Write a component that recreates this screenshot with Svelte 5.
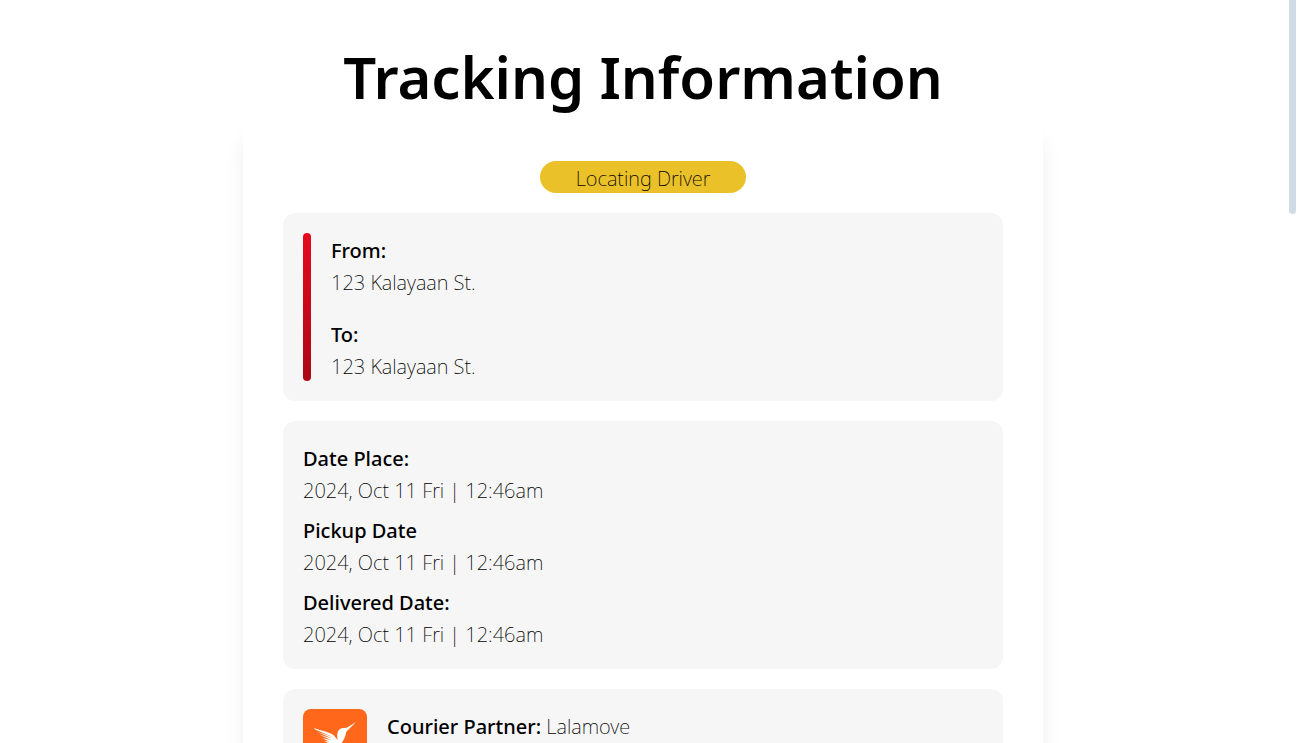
<script>
  const stops = [
    { label: 'From:', value: '123 Kalayaan St.' },
    { label: 'To:', value: '123 Kalayaan St.' }
  ];
  const dates = [
    { label: 'Date Place:', value: '2024, Oct 11 Fri | 12:46am' },
    { label: 'Pickup Date', value: '2024, Oct 11 Fri | 12:46am' },
    { label: 'Delivered Date:', value: '2024, Oct 11 Fri | 12:46am' }
  ];
</script>

<div class="page">
  <main>
    <h1>Tracking Information</h1>
    <div class="card">
      <p class="status">Locating Driver</p>

      <section class="panel route">
        <div class="line"></div>
        <dl class="stops">
          {#each stops as stop}
            <div>
              <dt>{stop.label}</dt>
              <dd>{stop.value}</dd>
            </div>
          {/each}
        </dl>
      </section>

      <section class="panel">
        <dl class="dates">
          {#each dates as date}
            <div>
              <dt>{date.label}</dt>
              <dd>{date.value}</dd>
            </div>
          {/each}
        </dl>
      </section>

      <section class="panel courier">
        <svg class="logo" viewBox="0 0 64 64" aria-hidden="true">
          <rect width="64" height="64" rx="8" fill="#ff671b" />
          <path
            fill="#fff"
            d="M53 13 43.500 22.500C42.500 27 41 31 38 35C35 40 30 43 25 44L14 51L21 42C25 39 26 37 25 34L21 32L26 32.500L19 29L28 31L16 25.500L29 29.500L13.500 22.500L30 28L12 20.500L11 19C19 22 27 23 31 26.500L34.500 31C34 26 34 21 38 19.500C41 18.500 43 19.500 45 18Z"
          />
        </svg>
        <p><strong>Courier Partner:</strong> Lalamove</p>
      </section>
    </div>
  </main>
  <div class="scrollbar"><div class="thumb"></div></div>
</div>

<style>
  :global(body) {
    margin: 0;
    background: #fff;
  }

  .page {
    display: flex;
    height: 100vh;
    overflow: hidden;
    color: #000;
    font-family: 'Noto Sans', 'Open Sans', sans-serif;
    font-size: 20px;
    font-weight: 200;
    line-height: 28px;
    font-variant-ligatures: none;
  }

  main {
    flex: 1;
    overflow-y: auto;
    scrollbar-width: none;
    box-sizing: border-box;
    padding: 37px 20px;
  }

  h1 {
    margin: 0 0 4px;
    text-align: center;
    font-size: 58px;
    font-weight: 600;
    line-height: 80px;
  }

  .card {
    display: flex;
    flex-direction: column;
    gap: 20px;
    box-sizing: border-box;
    max-width: 800px;
    margin: 0 auto;
    padding: 40px;
    border-radius: 12px;
    box-shadow: 0 16px 25px -5px rgba(0, 0, 0, 0.1);
  }

  p,
  dl,
  dd {
    margin: 0;
  }

  p,
  dt,
  dd {
    padding-top: 4px;
  }

  dt,
  strong {
    font-weight: 500;
  }

  .status {
    align-self: center;
    padding: 4px 36px 0;
    border-radius: 16px;
    background: #eac128;
  }

  .panel {
    padding: 20px;
    border-radius: 12px;
    background: #f6f6f6;
  }

  .route {
    display: flex;
    gap: 20px;
  }

  .line {
    width: 8px;
    border-radius: 4px;
    background: linear-gradient(#e50a1e, #ab0717);
  }

  .stops,
  .dates {
    display: flex;
    flex-direction: column;
    gap: 20px;
  }

  .dates {
    gap: 8px;
  }

  .courier {
    display: flex;
    gap: 20px;
  }

  .logo {
    width: 64px;
    height: 64px;
  }

  .scrollbar {
    width: 14px;
  }

  .thumb {
    width: 7px;
    height: 214px;
    margin-left: 3px;
    border-radius: 0 0 4px 4px;
    background: #d1dbe4;
  }
</style>
